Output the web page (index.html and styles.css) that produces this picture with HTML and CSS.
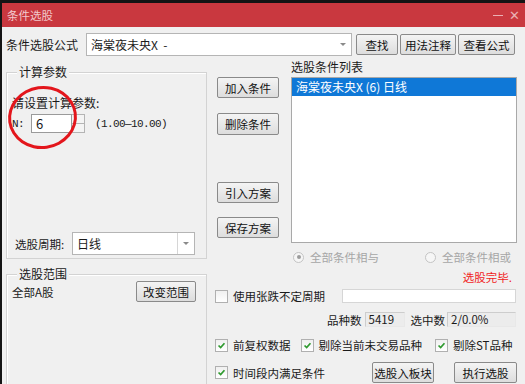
FILE: index.html
```html
<!DOCTYPE html>
<html lang="zh">
<head>
  <meta charset="UTF-8">
  <title>条件选股</title>
  <link rel="stylesheet" href="styles.css">
</head>
<body>
  <div class="window">
    <div class="titlebar">
      <span class="title">条件选股</span>
      <span class="win-ctrl"><span class="win-min"></span><span class="win-close">✕</span></span>
    </div>

    <div class="formula-row">
      <span class="formula-label">条件选股公式</span>
      <div class="combo formula-combo">
        <span class="combo-text">海棠夜未央X&nbsp; -</span>
        <span class="combo-arrow"></span>
      </div>
      <button class="btn btn-find">查找</button>
      <button class="btn btn-usage">用法注释</button>
      <button class="btn btn-view">查看公式</button>
    </div>

    <div class="main">
      <!-- left: params + range -->
      <div class="left-col">
        <div class="group group-params">
          <div class="group-title">计算参数</div>
          <div class="param-hint">请设置计算参数:</div>
          <div class="param-row">
            <span class="param-name">N:</span>
            <span class="spin-input">6</span>
            <span class="spin"><span></span><span></span></span>
            <span class="param-range">(1.00—10.00)</span>
          </div>
          <div class="period-row">
            <span class="period-label">选股周期:</span>
            <div class="combo period-combo">
              <span class="combo-text">日线</span>
              <span class="combo-arrow sep"></span>
            </div>
          </div>
        </div>

        <div class="group group-range">
          <div class="group-title">选股范围</div>
          <div class="range-row">
            <span>全部A股</span>
            <button class="btn btn-range">改变范围</button>
          </div>
        </div>
      </div>

      <!-- right: conditions + options -->
      <div class="right-col">
        <div class="cond-area">
          <div class="btn-col">
            <button class="btn btn-side">加入条件</button>
            <button class="btn btn-side btn-del">删除条件</button>
            <button class="btn btn-side btn-load">引入方案</button>
            <button class="btn btn-side btn-save">保存方案</button>
          </div>
          <div class="list-col">
            <div class="list-label">选股条件列表</div>
            <div class="cond-list">
              <div class="cond-item selected">海棠夜未央X (6) 日线</div>
            </div>
          </div>
        </div>

        <div class="radio-row">
          <span class="radio-item"><span class="radio checked"></span>全部条件相与</span>
          <span class="radio-item"><span class="radio"></span>全部条件相或</span>
        </div>

        <div class="status">选股完毕.</div>

        <div class="opt-row period-opt">
          <span class="check-item"><span class="check"></span>使用张跌不定周期</span>
          <span class="text-field"></span>
        </div>

        <div class="count-row">
          <span>品种数</span>
          <span class="ro-field ro-count">5419</span>
          <span class="count-label2">选中数</span>
          <span class="ro-field ro-picked">2/0.0%</span>
        </div>

        <div class="opt-row flags">
          <span class="check-item"><span class="check on"><svg viewBox="0 0 13 13"><path d="M3 6.5 L5.5 9 L10 3.8" /></svg></span>前复权数据</span>
          <span class="check-item ci-2"><span class="check on"><svg viewBox="0 0 13 13"><path d="M3 6.5 L5.5 9 L10 3.8" /></svg></span>剔除当前未交易品种</span>
          <span class="check-item ci-3"><span class="check on"><svg viewBox="0 0 13 13"><path d="M3 6.5 L5.5 9 L10 3.8" /></svg></span>剔除ST品种</span>
        </div>

        <div class="opt-row action-row">
          <span class="check-item"><span class="check on"><svg viewBox="0 0 13 13"><path d="M3 6.5 L5.5 9 L10 3.8" /></svg></span>时间段内满足条件</span>
          <button class="btn btn-block">选股入板块</button>
          <button class="btn btn-run">执行选股</button>
        </div>
      </div>
    </div>

    <div class="mark-circle"></div>
  </div>
</body>
</html>
```

FILE: styles.css
```css
/* Global */
*, *::before, *::after { box-sizing: border-box; }
body {
  margin: 0;
  background: #141414;
  overflow: hidden;
  font-family: "Noto Sans CJK SC", "Noto Sans", sans-serif;
  font-size: 11.5px;
  color: #1a1a1a;
}

.window {
  position: relative;
  margin: 3px 0 0 2px;
  width: 523px;
  height: 381px;
  background: #f0f0f0;
  overflow: hidden;
  white-space: nowrap;
}

/* Title bar */
.titlebar {
  height: 24px;
  background: #c9383f;
  color: #f3c9cc;
  display: flex;
  align-items: center;
  justify-content: space-between;
  padding: 0 5px 0 5px;
  line-height: 16px;
}
.win-ctrl { display: flex; align-items: center; gap: 6px; }
.win-min { width: 10px; height: 1px; background: #eab0b4; }
.win-close { font-size: 13px; color: #eab0b4; }

/* Buttons */
.btn {
  font-family: inherit;
  font-size: 11.5px;
  color: #111;
  height: 21px;
  padding: 0;
  border: 1px solid #8a8a8a;
  border-radius: 2px;
  background: linear-gradient(#f4f4f4, #dddddd);
  line-height: 18px;
  white-space: nowrap;
  flex-shrink: 0;
}

/* Combo boxes */
.combo {
  display: flex;
  align-items: center;
  height: 23px;
  background: #fff;
  border: 1px solid #b5b5b5;
}
.combo-text { flex: 1; padding-left: 4px; line-height: 16px; font-size: 12px; }
.combo-arrow {
  width: 17px;
  height: 100%;
  display: flex;
  align-items: center;
  justify-content: center;
}
.combo-arrow::after {
  content: "";
  border-left: 3px solid transparent;
  border-right: 3px solid transparent;
  border-top: 3px solid #8a8a8a;
}
.combo-arrow.sep { border-left: 1px solid #d6d6d6; }

/* Formula row */
.formula-row {
  display: flex;
  align-items: center;
  margin-top: 6px;
  height: 23px;
}
.formula-label { width: 84px; padding-left: 4px; line-height: 16px; font-size: 12px; }
.formula-combo { width: 266px; }
.btn-find { width: 42px; margin-left: 4px; }
.btn-usage { width: 56px; margin-left: 2px; }
.btn-view { width: 57px; margin-left: 2px; }

/* Main area */
.main { display: flex; }
.left-col { margin-left: 4px; width: 201px; padding-top: 16px; flex-shrink: 0; }

.group {
  border: 1px solid #d3d3d3;
  box-shadow: inset 1px 1px 0 #fff;
  display: flex;
  flex-direction: column;
}
.group-title {
  align-self: flex-start;
  margin: -8px 0 0 5px;
  padding: 0 2px;
  background: #f0f0f0;
  line-height: 14px;
  font-size: 12px;
}

.group-params { height: 187px; padding-left: 5px; }
.param-hint { margin-top: 16px; line-height: 16px; font-size: 12px; }
.param-row {
  display: flex;
  align-items: center;
  margin-top: 3px;
  height: 19px;
}
.param-name {
  width: 19px;
  font-family: "Liberation Mono", monospace;
  font-size: 11px;
  letter-spacing: -0.6px;
}
.spin-input {
  width: 41px;
  height: 19px;
  background: #fff;
  border: 1px solid #9a9a9a;
  padding-left: 4px;
  line-height: 17px;
  font-size: 13px;
}
.spin { display: flex; flex-direction: column; width: 13px; height: 19px; }
.spin span {
  flex: 1;
  border: 1px solid #b4b4b4;
  border-left: none;
  background: #f4f4f4;
}
.spin span + span { border-top: none; }
.param-range {
  margin-left: 10px;
  font-family: "Liberation Mono", monospace;
  font-size: 11px;
  letter-spacing: -0.6px;
}

.period-row {
  display: flex;
  align-items: center;
  margin-top: auto;
  margin-bottom: 3px;
  padding-left: 3px;
}
.period-label { width: 57px; line-height: 16px; }
.period-combo { width: 123px; }

.group-range { margin-top: 15px; height: 120px; padding: 0 10px 0 5px; }
.range-row {
  display: flex;
  align-items: center;
  justify-content: space-between;
  height: 21px;
}
.btn-range { width: 60px; }

/* Right column */
.right-col { width: 312px; flex-shrink: 0; }
.cond-area { display: flex; }
.btn-col {
  display: flex;
  flex-direction: column;
  width: 62px;
  margin-left: 10px;
  padding-top: 21px;
}
.btn-side { width: 62px; }
.btn-del { margin-top: 15px; height: 22px; }
.btn-load { margin-top: 47px; }
.btn-save { margin-top: 14px; }

.list-col { margin-left: 12px; width: 226px; }
.list-label { margin-top: 3px; line-height: 16px; font-size: 12px; }
.cond-list {
  margin-top: 2px;
  height: 166px;
  background: #fff;
  border: 1px solid #a9a9a9;
}
.cond-item { height: 18px; line-height: 18px; padding-left: 4px; font-size: 12px; }
.cond-item.selected { background: #0f78d7; color: #fff; }

/* Radios */
.radio-row {
  display: flex;
  align-items: center;
  height: 18px;
  margin-top: 5px;
  padding-left: 86px;
  color: #a6a6a6;
}
.radio-item { display: flex; align-items: center; gap: 6px; }
.radio-item + .radio-item { margin-left: 46px; }
.radio {
  width: 11px;
  height: 11px;
  border-radius: 50%;
  border: 1px solid #c4c4c4;
  background: #f6f6f6;
  display: flex;
  align-items: center;
  justify-content: center;
}
.radio.checked::after {
  content: "";
  width: 4px;
  height: 4px;
  border-radius: 50%;
  background: #9c9c9c;
}

.status {
  margin-top: 3px;
  line-height: 16px;
  text-align: right;
  padding-right: 7px;
  color: #f01c1c;
}

/* Options */
.opt-row { display: flex; align-items: center; padding-left: 8px; }
.check-item {
  display: flex;
  align-items: center;
  gap: 5px;
  line-height: 16px;
  flex-shrink: 0;
}
.check {
  width: 13px;
  height: 13px;
  border: 1px solid #b0b0b0;
  background: linear-gradient(#f0f0f0, #fff);
  display: flex;
  flex-shrink: 0;
}
.check svg { width: 11px; height: 11px; }
.check path { fill: none; stroke: #2f9a2f; stroke-width: 2; }

.period-opt { margin-top: 4px; height: 14px; }
.text-field {
  margin-left: auto;
  margin-right: 3px;
  width: 174px;
  height: 14px;
  background: #fff;
  border: 1px solid #d6d6d6;
}

.count-row {
  display: flex;
  align-items: center;
  justify-content: flex-end;
  margin-top: 9px;
  padding-right: 3px;
  height: 15px;
  line-height: 16px;
}
.ro-field {
  height: 15px;
  border: 1px solid #cdcdcd;
  border-right-color: #e8e8e8;
  border-bottom-color: #e8e8e8;
  background: #ececec;
  padding-left: 3px;
  line-height: 13px;
}
.ro-count { width: 40px; margin-left: 3px; }
.count-label2 { margin-left: 6px; }
.ro-picked { width: 69px; margin-left: 2px; }

.flags { margin-top: 11px; height: 14px; }
.ci-2 { margin-left: 10px; }
.ci-3 { margin-left: 13px; }

.action-row { margin-top: 10px; height: 21px; }
.btn-block { width: 62px; margin-left: auto; }
.btn-run { width: 63px; margin-left: 20px; margin-right: 2px; }

/* Red marker drawn over the params box */
.mark-circle {
  position: absolute;
  left: 6px;
  top: 83px;
  width: 69px;
  height: 63px;
  border: 3px solid #e3161c;
  border-radius: 50%;
  transform: rotate(-8deg);
}
```
